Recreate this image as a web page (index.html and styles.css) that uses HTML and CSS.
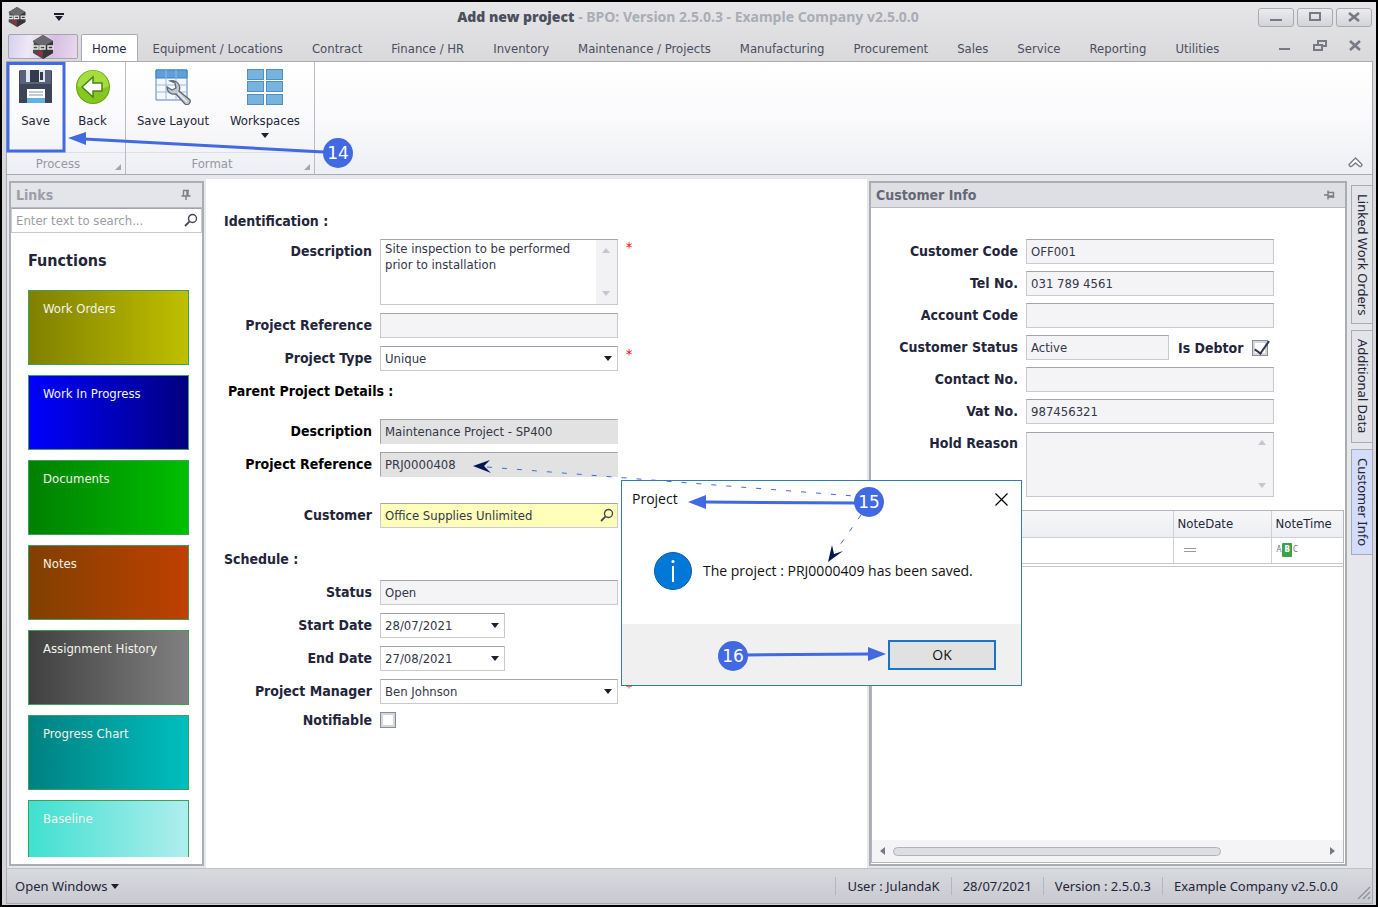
FILE: index.html
```
<!DOCTYPE html>
<html lang="en">

<head>
    <meta charset="UTF-8">
    <meta name="viewport" content="width=device-width, initial-scale=1.0">
    <title>Add new project - BPO</title>
    <link rel="stylesheet" href="styles.css">
</head>

<body>
    <svg width="0" height="0" class="defs">
        <symbol id="logo" viewBox="0 0 24 24">
            <path d="M12 0 22 6v12l-10 6L2 18V6z" fill="#4b4b4f" />
            <path d="M12 0 22 6l-10 6L2 6z" fill="#6a6a6e" />
            <path d="M12 12 22 6v12l-10 6z" fill="#37373b" />
            <path d="M2 7v7h5v-3H2M9 15v-4h5v3H9M17 11h5v3h-5z" fill="none" stroke="#e6e6e6" stroke-width="1.4" />
            <path d="M8 16l4 1-1 4-4-2z" fill="#b0262c" />
        </symbol>
        <symbol id="search" viewBox="0 0 14 14">
            <circle cx="8.5" cy="5.5" r="4" fill="none" stroke="#44464f" stroke-width="1.4" />
            <path d="M5.6 8.4 1 13" stroke="#44464f" stroke-width="1.8" />
        </symbol>
        <symbol id="pin" viewBox="0 0 12 12">
            <path d="M3 1.5h6M3.5 1v6M8 1v6M7 1v6M1.5 7h9M6 7v4" fill="none" stroke="#7b7e88" stroke-width="1.4" />
        </symbol>
    </svg>

    <div class="window">
        <header class="titlebar">
            <svg class="logo-small"><use href="#logo" /></svg>
            <svg class="quick-menu" viewBox="0 0 10 8"><path d="M0 0h10v2H0zM1 3h8L5 8z" fill="#1d1f30" /></svg>
            <h1><b>Add new project</b> - BPO: Version 2.5.0.3 - Example Company v2.5.0.0</h1>
            <div class="window-buttons">
                <button type="button" aria-label="Minimize"><svg viewBox="0 0 12 10"><path d="M0 8h12" stroke-width="2" /></svg></button>
                <button type="button" aria-label="Maximize"><svg viewBox="0 0 12 10"><path d="M1 1h10v7H1z" stroke-width="2" /></svg></button>
                <button type="button" aria-label="Close"><svg viewBox="0 0 12 10"><path d="M1 1l10 8M11 1 1 9" stroke-width="2.6" /></svg></button>
            </div>
        </header>

        <nav class="tabs">
            <button type="button" class="app-button" aria-label="BPO menu"><svg><use href="#logo" /></svg></button>
            <a href="#" class="active">Home</a>
            <a href="#">Equipment / Locations</a>
            <a href="#">Contract</a>
            <a href="#">Finance / HR</a>
            <a href="#">Inventory</a>
            <a href="#">Maintenance / Projects</a>
            <a href="#">Manufacturing</a>
            <a href="#">Procurement</a>
            <a href="#">Sales</a>
            <a href="#">Service</a>
            <a href="#">Reporting</a>
            <a href="#">Utilities</a>
            <div class="child-buttons">
                <button type="button" aria-label="Minimize"><svg viewBox="0 0 14 12"><path d="M1 9h11" stroke-width="2" /></svg></button>
                <button type="button" aria-label="Restore"><svg viewBox="0 0 14 12"><path d="M5 4V1h8v5h-3M1 5h8v5H1z" stroke-width="2" /></svg></button>
                <button type="button" aria-label="Close"><svg viewBox="0 0 14 12"><path d="M2 1l10 9M12 1 2 10" stroke-width="2.6" /></svg></button>
            </div>
        </nav>

        <section class="ribbon">
            <div class="group process">
                <div class="tools">
                    <button type="button">
                        <svg viewBox="0 0 36 36">
                            <path d="M2 1h31l1 1v32H1V2z" fill="#3d4558" />
                            <path d="M2 1h31v14H2z" fill="#59627a" />
                            <path d="M8 1h19v12H8z" fill="#dfe6ee" />
                            <path d="M12 1h9v12h-9z" fill="#343b4c" />
                            <path d="M22 3h3v8h-3z" fill="#343b4c" />
                            <path d="M9 20h18v14H9z" fill="#fff" />
                            <path d="M9 29h18v5H9z" fill="#62b2e4" />
                            <path d="M11 23h14M11 26h14" stroke="#8b95a5" />
                        </svg>
                        Save
                    </button>
                    <button type="button">
                        <svg viewBox="0 0 36 36">
                            <circle cx="18" cy="18" r="17" fill="#62a512" />
                            <circle cx="18" cy="18" r="16" fill="#86c71f" />
                            <path d="M2.5 17a15.5 15.5 0 0 1 31 0c-9 5-22 5-31 0z" fill="#a5dc3e" />
                            <path d="M7 18 18 8v6h9v8h-9v6z" fill="#fff" stroke="#4b8510" stroke-width="1.5" />
                        </svg>
                        Back
                    </button>
                </div>
                <p>Process</p>
            </div>
            <div class="group format">
                <div class="tools">
                    <button type="button">
                        <svg viewBox="0 0 36 36">
                            <path d="M1 1h31v30H1z" fill="#f4f8fc" stroke="#5a84b4" />
                            <path d="M1 1h31v8H1z" fill="#5ba2dc" stroke="#3f7fbd" />
                            <path d="M11 1v30M21 1v30M1 16h31M1 23h31" stroke="#9db9d6" />
                            <path d="M15 12c4-1 8 1 9 4 1 2 1 4 0 6l11 9c1 3-2 6-5 4l-9-10c-5 1-9-2-9-7l5 3 4-2-1-5z" fill="#c3c9d1" stroke="#5f6875" stroke-width="1.3" />
                            <path d="M23 24l9 9" stroke="#eef1f4" stroke-width="1.3" />
                        </svg>
                        Save Layout
                    </button>
                    <button type="button">
                        <svg viewBox="0 0 36 36">
                            <path d="M0 0h17v11H0zM19 0h17v11H19zM0 12h17v11H0zM19 12h17v11H19zM0 25h17v11H0zM19 25h17v11H19z" fill="#4f90c4" />
                            <path d="M1 1h15v9H1zM20 1h15v9H20zM1 13h15v9H1zM20 13h15v9H20zM1 26h15v9H1zM20 26h15v9H20z" fill="#78b3de" />
                        </svg>
                        Workspaces
                        <span class="arrow"></span>
                    </button>
                </div>
                <p>Format</p>
            </div>
            <button type="button" class="collapse" aria-label="Collapse ribbon">
                <svg viewBox="0 0 16 14"><path d="M1.5 9.5 8 3l6.500 6.500c0 2-2 2.500-3 1.500L8 8l-3.500 3c-1 1-3 .5-3-1.500z" fill="#fff" stroke="#777a82" stroke-width="1.4" /></svg>
            </button>
        </section>

        <main>
            <aside class="panel links">
                <h2>Links <svg><use href="#pin" /></svg></h2>
                <div class="search">
                    <input type="text" placeholder="Enter text to search..." aria-label="Search links">
                    <svg><use href="#search" /></svg>
                </div>
                <h3>Functions</h3>
                <div class="tiles">
                    <button type="button" class="olive">Work Orders</button>
                    <button type="button" class="blue">Work In Progress</button>
                    <button type="button" class="green">Documents</button>
                    <button type="button" class="rust">Notes</button>
                    <button type="button" class="gray">Assignment History</button>
                    <button type="button" class="teal">Progress Chart</button>
                    <button type="button" class="aqua">Baseline</button>
                </div>
            </aside>

            <form class="project">
                <h3>Identification :</h3>
                <label for="description">Description</label>
                <div class="memo">
                    <textarea id="description">Site inspection to be performed prior to installation</textarea>
                </div>
                <i class="required">*</i>
                <label for="reference">Project Reference</label>
                <input type="text" id="reference" readonly>
                <label for="type">Project Type</label>
                <div class="combo"><select id="type"><option>Unique</option></select></div>
                <i class="required">*</i>

                <h3 class="dark">Parent Project Details :</h3>
                <label for="parentDescription" class="dark parent-first">Description</label>
                <input type="text" id="parentDescription" class="locked parent-first" value="Maintenance Project - SP400" readonly>
                <label for="parentReference" class="dark">Project Reference</label>
                <input type="text" id="parentReference" class="locked" value="PRJ0000408" readonly>
                <label for="customer" class="customer">Customer</label>
                <div class="lookup customer">
                    <input type="text" id="customer" value="Office Supplies Unlimited">
                    <svg><use href="#search" /></svg>
                </div>

                <h3 class="schedule">Schedule :</h3>
                <label for="status">Status</label>
                <input type="text" id="status" value="Open" readonly>
                <label for="start">Start Date</label>
                <div class="combo date"><select id="start"><option>28/07/2021</option></select></div>
                <label for="end">End Date</label>
                <div class="combo date"><select id="end"><option>27/08/2021</option></select></div>
                <label for="manager">Project Manager</label>
                <div class="combo"><select id="manager"><option>Ben Johnson</option></select></div>
                <i class="required">*</i>
                <label for="notifiable" class="check-row">Notifiable</label>
                <input type="checkbox" id="notifiable">
            </form>

            <section class="panel info">
                <h2>Customer Info <svg class="pinned"><use href="#pin" /></svg></h2>
                <form>
                    <label for="code">Customer Code</label>
                    <input type="text" id="code" value="OFF001" readonly>
                    <label for="tel">Tel No.</label>
                    <input type="text" id="tel" value="031 789 4561" readonly>
                    <label for="account">Account Code</label>
                    <input type="text" id="account" readonly>
                    <label for="customerStatus">Customer Status</label>
                    <div class="status-row">
                        <input type="text" id="customerStatus" value="Active" readonly>
                        <label for="debtor">Is Debtor</label>
                        <input type="checkbox" id="debtor" checked>
                    </div>
                    <label for="contact">Contact No.</label>
                    <input type="text" id="contact" readonly>
                    <label for="vat">Vat No.</label>
                    <input type="text" id="vat" value="987456321" readonly>
                    <label for="hold">Hold Reason</label>
                    <div class="memo"><textarea id="hold" readonly></textarea></div>
                </form>
                <div class="notes">
                    <table>
                        <thead>
                            <tr>
                                <th></th>
                                <th class="date-col">NoteDate</th>
                                <th class="time-col">NoteTime</th>
                            </tr>
                        </thead>
                        <tbody>
                            <tr>
                                <td></td>
                                <td><span class="equals"></span></td>
                                <td><span class="abc">A<b>B</b>C</span></td>
                            </tr>
                        </tbody>
                    </table>
                    <div class="scrollbar"><span></span></div>
                </div>
            </section>

            <nav class="side-tabs">
                <a href="#">Linked Work Orders</a>
                <a href="#">Additional Data</a>
                <a href="#" class="active">Customer Info</a>
            </nav>
        </main>

        <footer>
            <button type="button">Open Windows <span class="arrow"></span></button>
            <span>User : JulandaK</span>
            <span>28/07/2021</span>
            <span>Version : 2.5.0.3</span>
            <span>Example Company v2.5.0.0</span>
            <svg class="grip" viewBox="0 0 14 14"><path d="M1 13 13 1M6 13l7-7M11 13l2-2" stroke="#8d9099" stroke-width="1.3" /></svg>
        </footer>
    </div>

    <div class="dialog" role="dialog" aria-labelledby="dialogTitle">
        <div class="dialog-title">
            <span id="dialogTitle">Project</span>
            <button type="button" aria-label="Close"><svg viewBox="0 0 13 13"><path d="M.5.5l12 12M12.5.5l-12 12" stroke="#000" stroke-width="1.2" /></svg></button>
        </div>
        <div class="dialog-body">
            <svg viewBox="0 0 38 38">
                <circle cx="19" cy="19" r="18.5" fill="#0078d7" stroke="#0a5ea8" />
                <path d="M19 14v16" stroke="#fff" stroke-width="2" />
                <circle cx="19" cy="9.5" r="1.5" fill="#fff" />
            </svg>
            <p>The project : PRJ0000409 has been saved.</p>
        </div>
        <div class="dialog-footer"><button type="button">OK</button></div>
    </div>

    <!-- step markers -->
    <svg class="steps">
        <rect x="8" y="63.5" width="56" height="87.5" fill="none" stroke="#4169e1" stroke-width="3" />
        <g stroke="#4169e1" stroke-width="3">
            <path d="M84 139l240 13" />
            <path d="M704 502l152 1" />
            <path d="M746 655l124-1" />
        </g>
        <g fill="#4169e1">
            <path d="M68 138l18-6v13z" />
            <path d="M688 502l18-7v14z" />
            <path d="M886 654l-18-7v14z" />
            <circle cx="338" cy="153" r="15" />
            <circle cx="869" cy="502" r="15" />
            <circle cx="733" cy="656" r="15" />
        </g>
        <g stroke="#4169e1" stroke-dasharray="5 10" fill="none">
            <path d="M487 467l367 29" />
            <path d="M861 515l-26 37" />
        </g>
        <path d="M473 466l17-6-6 6 7 7z" fill="#06164f" />
        <path d="M828 562l4-17 2 9 9-3z" fill="#06164f" />
        <g class="numbers">
            <text x="338" y="159">14</text>
            <text x="869" y="508">15</text>
            <text x="733" y="662">16</text>
        </g>
    </svg>
</body>

</html>
```
FILE: styles.css
```
* {
    box-sizing: border-box;
}

body {
    margin: 0;
    background: #000;
    color: #23253a;
    font-family: "DejaVu Sans Condensed", "Noto Sans", sans-serif;
    font-size: 13px;
    line-height: 16px;
}

button,
input,
select,
textarea {
    font: inherit;
    color: inherit;
    margin: 0;
}

button {
    background: none;
    border: none;
    padding: 0;
    cursor: pointer;
}

a {
    color: inherit;
    text-decoration: none;
}

h1,
h2,
h3,
p {
    margin: 0;
}

.defs {
    position: absolute;
}

.window {
    display: flex;
    flex-direction: column;
    height: 100vh;
    border: 2px solid #000;
    padding: 0 3px 1px 4px;
    background: linear-gradient(#e6e6e8, #d9d9dc 60px, #d2d2d8);
}

.arrow {
    display: inline-block;
    border: 4px solid transparent;
    border-top: 5px solid #1d1f30;
    border-bottom: 0;
}

/* title bar */
.titlebar {
    display: flex;
    align-items: center;
    height: 32px;
    padding-bottom: 2px;
}

.logo-small {
    width: 22px;
    height: 20px;
}

.quick-menu {
    width: 10px;
    height: 8px;
    margin-left: 26px;
}

.titlebar h1 {
    flex: 1;
    padding-left: 54px;
    text-align: center;
    font-family: "Noto Sans", sans-serif;
    font-size: 14px;
    line-height: 20px;
    color: #a9adb5;
}

.titlebar b {
    color: #4c4f5c;
}

.window-buttons {
    display: flex;
    gap: 3px;
    padding-right: 1px;
}

.window-buttons button {
    width: 36px;
    height: 19px;
    border: 1px solid #a9abb3;
    border-radius: 3px;
    background: linear-gradient(#ececee, #d3d4d9);
    display: grid;
    place-items: center;
}

.window-buttons svg {
    width: 12px;
    height: 10px;
}

.window-buttons path,
.child-buttons path {
    fill: none;
    stroke: #777a86;
}

/* ribbon tabs */
.tabs {
    display: flex;
    align-items: stretch;
    gap: 1px;
    height: 27px;
    color: #4b4e5e;
}

.tabs a {
    padding: 7px 14px 0;
    white-space: nowrap;
}

.tabs a.active {
    margin-left: 2px;
    padding: 6px 10px 0;
    border: 1px solid #a9abb3;
    border-bottom: 0;
    border-radius: 2px 2px 0 0;
    background: #fff;
    color: #23253a;
}

.app-button {
    width: 70px;
    margin: 0 0 2px 2px;
    border: 1px solid #a5a5b0;
    border-radius: 2px;
    background: linear-gradient(100deg, #d5d0ee, #efe8f6 30%, #d6bfe2 65%, #e9d9ee);
}

.app-button svg {
    display: block;
    width: 26px;
    height: 24px;
    margin: auto;
}

.child-buttons {
    display: flex;
    gap: 21px;
    margin-left: auto;
    padding-right: 11px;
}

.child-buttons svg {
    width: 14px;
    height: 12px;
}

/* ribbon */
.ribbon {
    display: flex;
    height: 114px;
    border: 1px solid #a9abb3;
    background: linear-gradient(#fff, #fafafc 50%, #eeeff3);
}

.group {
    display: flex;
    flex-direction: column;
    position: relative;
    border-right: 1px solid #b9bbc2;
}

.group::after {
    content: "";
    position: absolute;
    right: 4px;
    bottom: 4px;
    border: 3px solid #a4a6ac;
    border-top-color: transparent;
    border-left-color: transparent;
}

.process {
    width: 119px;
}

.format {
    width: 189px;
}

.tools {
    display: flex;
    flex: 1;
    border-bottom: 1px solid #dddfe4;
}

.tools button {
    display: flex;
    flex-direction: column;
    align-items: center;
    padding-top: 7px;
    white-space: nowrap;
}

.process button {
    width: 57px;
}

.format button {
    width: 90px;
    margin-left: 2px;
}

.tools svg {
    width: 36px;
    height: 36px;
    margin-bottom: 8px;
}

.tools .arrow {
    margin-top: 4px;
}

.group p {
    height: 21px;
    padding: 3px 16px 0 0;
    text-align: center;
    color: #95979f;
}

.collapse {
    align-self: flex-end;
    margin: 0 8px 5px auto;
}

.collapse svg {
    display: block;
    width: 17px;
    height: 14px;
}

/* main area */
main {
    flex: 1;
    min-height: 0;
    display: grid;
    grid-template-columns: 195px 1fr 478px 23px;
    gap: 2px;
    padding: 4px 0 0 2px;
    border: solid #a9abb3;
    border-width: 0 1px;
    background: #e6e7eb;
}

.panel {
    display: flex;
    flex-direction: column;
    min-height: 0;
    margin: 2px 0;
    border: 2px solid #abadb5;
    background: #fff;
}

.panel h2 {
    display: flex;
    justify-content: space-between;
    align-items: center;
    height: 25px;
    padding: 0 10px 0 5px;
    border-bottom: 1px solid #b9bbc2;
    background: #dedfe2;
    font-size: 14px;
    color: #656877;
}

.panel h2 svg {
    width: 12px;
    height: 12px;
}

.pinned {
    transform: rotate(90deg);
}

.panel.links h2 {
    background: #e4e5e8;
    color: #9b9ea8;
}

.search {
    position: relative;
}

.search input {
    width: 100%;
    height: 24px;
    padding: 0 24px 0 4px;
    border: 1px solid #c3c5cb;
    border-top: 0;
}

.search input::placeholder {
    color: #9a9ca6;
}

.search svg,
.lookup svg {
    position: absolute;
    right: 4px;
    top: 5px;
    width: 14px;
    height: 14px;
}

.links h3 {
    padding: 18px 0 19px 17px;
    font-size: 16px;
    line-height: 20px;
}

.tiles {
    flex: 1;
    min-height: 0;
    overflow: hidden;
    display: flex;
    flex-direction: column;
    gap: 10px;
    margin: 0 13px 7px 17px;
}

.tiles button {
    flex: none;
    height: 75px;
    padding: 10px 14px;
    border: 1px solid #3c9f5c;
    display: flex;
    align-items: flex-start;
    color: #f4f4ec;
}

.olive { background: linear-gradient(to right, #808000, #bfbf00); }
.blue { background: linear-gradient(to right, #0000ff, #000080); }
.green { background: linear-gradient(to right, #008000, #00bf00); }
.rust { background: linear-gradient(to right, #804000, #bf4000); }
.gray { background: linear-gradient(to right, #404040, #808080); }
.teal { background: linear-gradient(to right, #008080, #00bfbf); }
.aqua { background: linear-gradient(to right, #40e0d0, #afeeee); }

/* forms */
.project {
    display: grid;
    grid-template-columns: 148px 238px 1fr;
    grid-auto-rows: min-content;
    gap: 8px;
    padding: 30px 0 0 18px;
    background: #fff;
}

.project h3 {
    grid-column: 1 / -1;
    height: 25px;
    padding-top: 4px;
    font-size: 14px;
}

.project > label,
.info form > label {
    grid-column: 1;
    padding-top: 4px;
    text-align: right;
    font-size: 14px;
    font-weight: bold;
    white-space: nowrap;
}

.project h3:first-child {
    height: 22px;
    padding-top: 4px;
}

.project .dark {
    color: #000;
}

.project h3.dark {
    padding-left: 4px;
}

.parent-first {
    margin-top: 7px;
}

.customer {
    margin-top: 18px;
}

.project h3.schedule {
    margin-top: 11px;
}

input[type="text"],
select,
textarea {
    display: block;
    width: 100%;
    height: 25px;
    padding: 0 4px;
    border: 1px solid #c9cad0;
    border-top-color: #a2a4ab;
    border-radius: 0;
    background: #fff;
    color: #34364a;
    appearance: none;
    outline: none;
}

input[readonly],
textarea[readonly] {
    background: #f4f4f7;
}

input.locked {
    border-color: #a2a4ab #e2e2e2 #e2e2e2 #a2a4ab;
    background: #e2e2e2;
}

textarea {
    height: 66px;
    padding: 1px 24px 1px 4px;
    resize: none;
    overflow: hidden;
}

.memo,
.combo,
.lookup {
    position: relative;
}

.memo::before,
.memo::after {
    content: "";
    position: absolute;
    right: 8px;
    border: 4px solid transparent;
}

.memo::before {
    top: 9px;
    border-top: 0;
    border-bottom: 5px solid #c6c7cc;
}

.memo::after {
    bottom: 9px;
    border-bottom: 0;
    border-top: 5px solid #c6c7cc;
}

.project textarea {
    background: linear-gradient(to left, #f2f2f5 21px, #fff 21px);
}

.combo::after {
    content: "";
    position: absolute;
    right: 6px;
    top: 10px;
    border: 4px solid transparent;
    border-top: 5px solid #1d1f30;
    border-bottom: 0;
}

.combo.date {
    width: 125px;
}

.lookup input {
    background: #ffffb9;
}

.required {
    color: #f00;
    font-style: normal;
    font-size: 14px;
}

input[type="checkbox"] {
    appearance: none;
    position: relative;
    width: 16px;
    height: 16px;
    border: 1px solid #8d8f98;
    background: #fff;
    box-shadow: inset 0 0 0 2px #d5d6dc;
}

.project .check-row {
    padding-top: 0;
}

input[type="checkbox"]:checked::after {
    content: "";
    position: absolute;
    left: 5px;
    top: -3px;
    width: 6px;
    height: 14px;
    border: solid #34364a;
    border-width: 0 2px 2px 0;
    transform: rotate(35deg);
}

.info form {
    display: grid;
    grid-template-columns: 147px 248px;
    gap: 7px 8px;
    padding-top: 31px;
}

.info textarea {
    height: 65px;
    margin-top: 1px;
}

.status-row {
    display: flex;
    align-items: center;
    gap: 9px;
}

.status-row input[type="text"] {
    width: 143px;
}

.status-row label {
    font-size: 14px;
    font-weight: bold;
    white-space: nowrap;
}

/* notes grid */
.notes {
    flex: 1;
    display: flex;
    flex-direction: column;
    margin: 13px 1px 1px 0;
    border: 1px solid #b3b5bc;
}

.notes table {
    width: 100%;
    border-collapse: collapse;
    border-bottom: 4px double #c6c8ce;
}

.notes th {
    height: 26px;
    padding: 0 4px;
    border-bottom: 1px solid #cfd0d6;
    border-left: 1px solid #cfd0d6;
    background: linear-gradient(#f7f7f9, #edeef1);
    text-align: left;
    font-weight: normal;
}

.notes td {
    height: 28px;
    padding: 0 5px;
    border-left: 1px solid #cfd0d6;
}

.date-col {
    width: 98px;
}

.time-col {
    width: 72px;
}

.equals {
    display: block;
    width: 12px;
    height: 4px;
    margin-left: 5px;
    border: solid #999ba3;
    border-width: 1px 0;
}

.abc {
    display: flex;
    align-items: center;
    gap: 1px;
    font-size: 8px;
    line-height: 12px;
    color: #6d6f78;
}

.abc b {
    padding: 1px 2px;
    border-radius: 1px;
    background: #3ba14b;
    color: #fff;
}

.scrollbar {
    display: flex;
    align-items: center;
    justify-content: space-between;
    height: 22px;
    margin-top: auto;
    padding: 0 8px;
    background: #f4f4f6;
}

.scrollbar::before,
.scrollbar::after {
    content: "";
    border: 4px solid transparent;
    border-right: 5px solid #777a86;
    border-left: 0;
}

.scrollbar::after {
    border-left: 5px solid #777a86;
    border-right: 0;
}

.scrollbar span {
    width: 328px;
    height: 9px;
    margin: 0 auto 0 8px;
    border: 1px solid #b0b2b9;
    border-radius: 5px;
    background: #dddee2;
}

/* side tabs */
.side-tabs {
    display: flex;
    flex-direction: column;
    gap: 6px;
    padding: 6px 0 0 2px;
    font-family: "Noto Sans", sans-serif;
}

.side-tabs a {
    writing-mode: vertical-rl;
    padding: 8px 0;
    width: 21px;
    line-height: 19px;
    border: 1px solid #a9abb3;
    border-right: 0;
    background: #e3e4e7;
    white-space: nowrap;
}

.side-tabs .active {
    background: #d3dcfb;
}

/* status bar */
footer {
    display: flex;
    align-items: center;
    height: 36px;
    border: 1px solid #a9abb3;
    border-top-color: #bfc1c8;
    background: linear-gradient(#d9dade, #c9cad1);
    font-family: "Noto Sans", sans-serif;
}

footer button {
    margin: 0 auto 0 8px;
}

footer .arrow {
    margin-bottom: 2px;
}

footer > span {
    padding: 1px 11px;
    border-left: 1px solid #b4b6be;
}

.grip {
    align-self: flex-end;
    width: 14px;
    height: 14px;
    margin: 0 1px 3px 8px;
}

/* message box */
.dialog {
    position: absolute;
    left: 621px;
    top: 480px;
    width: 401px;
    border: 1px solid #2f7fa8;
    background: #fff;
    color: #111;
    font-family: "Open Sans", sans-serif;
    font-size: 14px;
}

.dialog-title {
    display: flex;
    justify-content: space-between;
    align-items: center;
    height: 36px;
    padding: 0 13px 0 10px;
}

.dialog-title svg {
    display: block;
    width: 13px;
    height: 13px;
}

.dialog-body {
    display: flex;
    align-items: center;
    gap: 11px;
    height: 107px;
    padding: 1px 0 0 32px;
}

.dialog-body svg {
    width: 38px;
    height: 38px;
}

.dialog-footer {
    height: 61px;
    padding: 16px 25px 0 0;
    background: #f0f0f0;
    text-align: right;
}

.dialog-footer button {
    width: 108px;
    height: 30px;
    border: 2px solid #1874c9;
    background: #e1e1e1;
}

.steps {
    position: absolute;
    left: 0;
    top: 0;
    width: 100%;
    height: 100%;
    pointer-events: none;
}

.numbers {
    fill: #fff;
    font-family: "DejaVu Sans", sans-serif;
    font-size: 17px;
    text-anchor: middle;
}
```
